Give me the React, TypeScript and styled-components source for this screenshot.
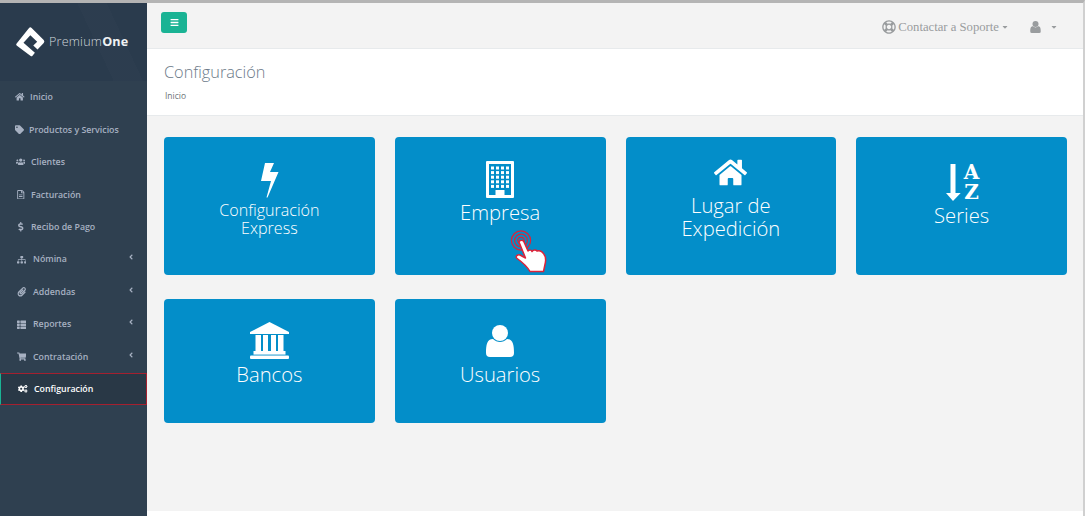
import React from 'react';
import styled, { createGlobalStyle } from 'styled-components';
import {
  FaHome, FaTag, FaUsers, FaRegFileAlt, FaDollarSign, FaSitemap, FaPaperclip, FaThList,
  FaShoppingCart, FaCogs, FaBars, FaRegLifeRing, FaAngleLeft, FaCaretDown,
} from 'react-icons/fa';

const GlobalStyle = createGlobalStyle`
  html, body { margin: 0; padding: 0; height: 100%; background: #fff; }
  body { font-family: "Open Sans", sans-serif; overflow: hidden; }
`;

const menu = [
  { label: 'Inicio', icon: FaHome, w: 10 },
  { label: 'Productos y Servicios', icon: FaTag, w: 9 },
  { label: 'Clientes', icon: FaUsers, w: 11 },
  { label: 'Facturación', icon: FaRegFileAlt, w: 11 },
  { label: 'Recibo de Pago', icon: FaDollarSign, w: 11 },
  { label: 'Nómina', icon: FaSitemap, w: 13, sub: true },
  { label: 'Addendas', icon: FaPaperclip, w: 13, sub: true },
  { label: 'Reportes', icon: FaThList, w: 13, sub: true },
  { label: 'Contratación', icon: FaShoppingCart, w: 13, sub: true },
  { label: 'Configuración', icon: FaCogs, w: 12, active: true },
];

const Logo = () => (
  <svg width="31" height="31" viewBox="15 18 95 95">
    <path
      fill="#fff"
      d="M20 72 L58 24 Q62 20 66 24 L103 61 Q107 66 103 70 L84 90 L71 78 L83 66 L62 46 L41 69 L76 100 L68 110 Q66 112 62 109 L20 78 Q17 75 20 72 Z"
    />
  </svg>
);

const HandCursor = () => (
  <svg width="37" height="45" viewBox="0 0 37 45">
    <g fill="none" stroke="#dc2339" strokeWidth="1.2">
      <circle cx="11" cy="12.5" r="9.6" />
      <circle cx="11" cy="12.5" r="6.4" />
      <circle cx="11" cy="12.5" r="3.2" />
    </g>
    <path
      fill="#fff"
      stroke="#dc2339"
      strokeWidth="1.5"
      strokeLinejoin="round"
      d="M9 14 C10 11.5 13 11.5 14 14 L18 23 C19.5 21.5 21.5 22 22 23.5 C23.5 21.5 26 21.5 27 23 C29 22 32 23.5 33 25 C35 27 36 30 35.5 34 L33.5 43.5 L20 43.5 C17 38 12 34 6.5 30 C5.5 28 8 26 10 27 L15.5 30 Z"
    />
  </svg>
);

const BoltIcon = () => (
  <svg width="19" height="35" viewBox="0 0 19 35" fill="#fff">
    <path d="M5 0 L14 0 L10 9 L18.5 9 L7.5 34.5 L6.5 34.5 L11 18 L1 18 Z" />
  </svg>
);

const windows = [0, 1, 2, 3, 4].flatMap((row) => [0, 1, 2, 3].map((col) => ({ row, col })));

const BuildingIcon = () => (
  <svg width="28" height="37" viewBox="0 0 28 37" fill="#fff">
    <path fillRule="evenodd" d="M1 0 H27 Q28 0 28 1 V36 Q28 37 27 37 H1 Q0 37 0 36 V1 Q0 0 1 0 Z M3 3 V34 H9.5 V29 H18.5 V34 H25 V3 Z" />
    {windows.map(({ row, col }) => (
      <rect key={`${row}-${col}`} x={5 + col * 5} y={5.5 + row * 4.6} width="3" height="3" />
    ))}
  </svg>
);

const UniversityIcon = () => (
  <svg width="39" height="37" viewBox="0 0 39 37" fill="#fff">
    <path d="M19.5 0 L39 10 V12 H0 V10 Z" />
    <rect x="5.5" y="13" width="5.5" height="16" />
    <rect x="13" y="13" width="5" height="16" />
    <rect x="21" y="13" width="5" height="16" />
    <rect x="28" y="13" width="5.5" height="16" />
    <rect x="3.5" y="29" width="32" height="3.6" />
    <rect x="0" y="33.5" width="39" height="3.5" rx="1" />
  </svg>
);

const UserGlyph = ({ width, height }: { width: number; height: number }) => (
  <svg width={width} height={height} viewBox="0 0 28 32" fill="currentColor">
    <circle cx="14" cy="8" r="8" />
    <path d="M4 32 Q0 32 0 28 C0 20 1 14 7 14 C9 16 11.5 17 14 17 C16.5 17 19 16 21 14 C27 14 28 20 28 28 Q28 32 24 32 Z" />
  </svg>
);

const SortIcon = () => (
  <SortBox>
    <svg width="15" height="37" viewBox="0 0 15 37" fill="#fff">
      <path d="M4.5 0 H9.5 V29 H14.7 L7 37 L0 29 H4.5 Z" />
    </svg>
    <SortLetters>
      <span>A</span>
      <span>Z</span>
    </SortLetters>
  </SortBox>
);

export default function App() {
  return (
    <>
      <GlobalStyle />
      <Frame>
        <Sidebar>
          <Brand>
            <Logo />
            <BrandName>Premium<strong>One</strong></BrandName>
          </Brand>
          <Menu>
            {menu.map(({ label, icon: Icon, w, sub, active }) => (
              <MenuItem key={label} $active={active}>
                <MenuIcon $w={w}><Icon /></MenuIcon>
                <span>{label}</span>
                {sub && <Chevron><FaAngleLeft /></Chevron>}
              </MenuItem>
            ))}
          </Menu>
        </Sidebar>
        <Main>
          <TopBar>
            <ToggleButton><FaBars /></ToggleButton>
            <TopActions>
              <SupportLink>
                <FaRegLifeRing size={14} />
                Contactar a Soporte
                <FaCaretDown size={8} />
              </SupportLink>
              <UserLink>
                <UserGlyph width={11} height={12} />
                <FaCaretDown size={8} />
              </UserLink>
            </TopActions>
          </TopBar>
          <PageHeader>
            <PageTitle>Configuración</PageTitle>
            <Breadcrumb>Inicio</Breadcrumb>
          </PageHeader>
          <Content>
            <CardGrid>
              <Card $h={138} $top={26}>
                <BoltIcon />
                <CardLabel $size={16.1} $line={18} $gap={3}>Configuración<br />Express</CardLabel>
              </Card>
              <Card $h={138} $top={24}>
                <BuildingIcon />
                <CardLabel $gap={1}>Empresa</CardLabel>
                <Cursor><HandCursor /></Cursor>
              </Card>
              <Card $h={138} $top={19}>
                <FaHome size={33} />
                <CardLabel $line={23} $gap={5}>Lugar de<br />Expedición</CardLabel>
              </Card>
              <Card $h={138} $top={27}>
                <SortIcon />
                <CardLabel $gap={1}>Series</CardLabel>
              </Card>
              <Card $h={124} $top={23}>
                <UniversityIcon />
                <CardLabel $gap={2}>Bancos</CardLabel>
              </Card>
              <Card $h={124} $top={26}>
                <UserGlyph width={28} height={32} />
                <CardLabel $gap={4}>Usuarios</CardLabel>
              </Card>
            </CardGrid>
          </Content>
          <BottomStrip />
        </Main>
      </Frame>
    </>
  );
}

const Frame = styled.div`
  display: flex;
  height: 516px;
  width: 1085px;
  box-sizing: border-box;
  border-top: 3px solid #b4b4b4;
  border-right: 2px solid #d0d0d0;
`;

const Sidebar = styled.aside`
  width: 147px;
  flex-shrink: 0;
  background: #2f4050;
  display: flex;
  flex-direction: column;
`;

const Brand = styled.div`
  height: 78px;
  box-sizing: border-box;
  padding: 0 0 1px 15px;
  display: flex;
  align-items: center;
  gap: 3px;
  background:
    linear-gradient(65deg, transparent 62%, rgba(255, 255, 255, 0.012) 62%, rgba(255, 255, 255, 0.012) 78%, transparent 78%),
    #2a3b4d;
`;

const BrandName = styled.div`
  color: #cfd5da;
  font-size: 12.6px;
  font-weight: 300;
  letter-spacing: 0.2px;
  strong {
    color: #f0f2f4;
    font-weight: 700;
  }
`;

const Menu = styled.nav`
  display: flex;
  flex-direction: column;
`;

const MenuItem = styled.div<{ $active?: boolean }>`
  height: 32.45px;
  box-sizing: border-box;
  display: flex;
  align-items: center;
  gap: 5px;
  padding-left: ${(p) => (p.$active ? '16px' : '15px')};
  padding-right: 12px;
  font-size: 8.8px;
  font-weight: 600;
  color: ${(p) => (p.$active ? '#ffffff' : '#a7b1c2')};
  background: ${(p) => (p.$active ? '#293846' : 'transparent')};
  ${(p) => p.$active && 'border: 1px solid #a5202f; border-left: 1px solid #1ab394;'}
`;

const MenuIcon = styled.span<{ $w: number }>`
  width: ${(p) => p.$w}px;
  display: flex;
  justify-content: center;
  font-size: 9.5px;
`;

const Chevron = styled.span`
  margin-left: auto;
  display: flex;
  font-size: 8px;
  margin-top: -4px;
`;

const Main = styled.main`
  flex: 1;
  display: flex;
  flex-direction: column;
  min-width: 0;
  background: #f3f3f3;
`;

const TopBar = styled.header`
  height: 46px;
  flex-shrink: 0;
  box-sizing: border-box;
  display: flex;
  align-items: flex-start;
  justify-content: space-between;
  padding: 9px 25px 0 14px;
  border-bottom: 1px solid #e7eaec;
`;

const ToggleButton = styled.button`
  width: 26px;
  height: 21px;
  padding: 0;
  border: none;
  border-radius: 3px;
  background: #1ab394;
  color: #fff;
  font-size: 9px;
  display: flex;
  align-items: center;
  justify-content: center;
`;

const TopActions = styled.div`
  display: flex;
  align-items: center;
  gap: 21px;
  color: #999c9e;
  height: 30px;
`;

const SupportLink = styled.span`
  display: flex;
  align-items: center;
  gap: 2px;
  font-family: "Liberation Serif", serif;
  font-size: 12.7px;
`;

const UserLink = styled.span`
  display: flex;
  align-items: center;
  gap: 9px;
`;

const PageHeader = styled.section`
  height: 67px;
  flex-shrink: 0;
  box-sizing: border-box;
  background: #fff;
  border-bottom: 1px solid #e7eaec;
  padding: 12px 17px 0;
  color: #6c7a89;
`;

const PageTitle = styled.h2`
  margin: 0;
  font-size: 16.3px;
  font-weight: 300;
  line-height: 22px;
`;

const Breadcrumb = styled.div`
  margin-top: 7px;
  margin-left: 1px;
  font-size: 8.5px;
  line-height: 12px;
  color: #6f7477;
`;

const Content = styled.div`
  flex: 1;
  padding: 21px 16px 0 17px;
`;

const CardGrid = styled.div`
  display: grid;
  grid-template-columns: repeat(4, 1fr);
  column-gap: 20px;
  row-gap: 24px;
`;

const Card = styled.div<{ $h: number; $top: number }>`
  position: relative;
  height: ${(p) => p.$h}px;
  box-sizing: border-box;
  padding-top: ${(p) => p.$top}px;
  border-radius: 4px;
  background: #038ec9;
  color: #fff;
  display: flex;
  flex-direction: column;
  align-items: center;
`;

const CardLabel = styled.div<{ $size?: number; $line?: number; $gap: number }>`
  margin-top: ${(p) => p.$gap}px;
  font-size: ${(p) => p.$size ?? 20.2}px;
  line-height: ${(p) => p.$line ?? 26}px;
  font-weight: 300;
  text-align: center;
`;

const SortBox = styled.div`
  display: flex;
  gap: 3px;
  height: 37px;
  margin-left: 2px;
`;

const SortLetters = styled.div`
  display: flex;
  flex-direction: column;
  justify-content: space-between;
  align-items: center;
  font-family: "DejaVu Serif", serif;
  font-weight: 700;
  font-size: 20px;
  line-height: 17px;
`;

const Cursor = styled.span`
  position: absolute;
  left: 115px;
  top: 91px;
  display: flex;
`;

const BottomStrip = styled.div`
  height: 5px;
  flex-shrink: 0;
  background: #fff;
`;
